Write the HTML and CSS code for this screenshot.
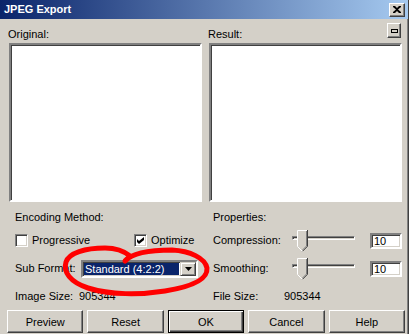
FILE: index.html
```html
<!DOCTYPE html>
<html>
<head>
<meta charset="utf-8">
<link rel="stylesheet" href="styles.css">
</head>
<body>
<div class="window">
  <div class="titlebar">
    <span class="title">JPEG Export</span>
    <span class="tbtn close">
      <svg width="8" height="7" viewBox="0 0 8 7"><path d="M0 0h2l2 2 2-2h2v1L5 3.5 8 6v1H6L4 5 2 7H0V6l3-2.5L0 1z" fill="#000"/></svg>
    </span>
  </div>
  <div class="content">
    <div class="previews">
      <div class="panel">
        <div class="panel-head"><span class="label">Original:</span></div>
        <div class="preview"></div>
      </div>
      <div class="panel">
        <div class="panel-head"><span class="label">Result:</span><span class="tbtn mini"><span class="mini-icon"></span></span></div>
        <div class="preview"></div>
      </div>
    </div>

    <div class="controls">
      <div class="col col-left">
        <div class="row r1"><span>Encoding Method:</span></div>
        <div class="row r2">
          <span class="check"></span><span class="check-label w-prog">Progressive</span>
          <span class="check"><svg width="7" height="7" viewBox="0 0 7 7"><path d="M0 2l2 2 5-4v3L2 7 0 5z" fill="#000"/></svg></span><span class="check-label">Optimize</span>
        </div>
        <div class="row r3">
          <span class="lbl-sub">Sub Format:</span>
          <span class="select">
            <span class="select-text">Standard (4:2:2)</span>
            <span class="select-btn"><svg width="7" height="4" viewBox="0 0 7 4"><path d="M0 0h7L3.5 4z" fill="#000"/></svg></span>
          </span>
        </div>
        <div class="row r4"><span class="lbl-size">Image Size:</span><span>905344</span></div>
      </div>
      <div class="col col-right">
        <div class="row r1"><span>Properties:</span></div>
        <div class="row r2">
          <span class="lbl-prop">Compression:</span>
          <span class="slider"><span class="track"></span><svg class="thumb" width="11" height="22" viewBox="0 0 11 22"><path d="M0 0h11v16l-5.5 5.5L0 16z" fill="#d4d0c8"/><path d="M0.5 16.5V0.5H10" fill="none" stroke="#fff"/><path d="M0.5 16.5l5 5" fill="none" stroke="#fff"/><path d="M10.5 0v16.3l-5 5" fill="none" stroke="#404040"/><path d="M9.5 1v15l-4 4" fill="none" stroke="#808080"/></svg></span>
          <span class="edit">10</span>
        </div>
        <div class="row r3">
          <span class="lbl-prop">Smoothing:</span>
          <span class="slider"><span class="track"></span><svg class="thumb" width="11" height="22" viewBox="0 0 11 22"><path d="M0 0h11v16l-5.5 5.5L0 16z" fill="#d4d0c8"/><path d="M0.5 16.5V0.5H10" fill="none" stroke="#fff"/><path d="M0.5 16.5l5 5" fill="none" stroke="#fff"/><path d="M10.5 0v16.3l-5 5" fill="none" stroke="#404040"/><path d="M9.5 1v15l-4 4" fill="none" stroke="#808080"/></svg></span>
          <span class="edit">10</span>
        </div>
        <div class="row r4"><span class="lbl-file">File Size:</span><span>905344</span></div>
      </div>
    </div>

    <div class="buttons">
      <button class="btn">Preview</button>
      <button class="btn">Reset</button>
      <button class="btn default">OK</button>
      <button class="btn">Cancel</button>
      <button class="btn">Help</button>
    </div>
  </div>

  <svg class="scribble" width="409" height="334" viewBox="0 0 409 334">
    <path d="M125 261 C132 253 150 250 172 250 C190 251 205 258 207 268 C208 280 190 287 165 291 C140 295 110 295 88 288 C70 282 63 272 66 262 C69 253 85 248 105 248 C115 248 124 251 130 256" fill="none" stroke="#ff0000" stroke-width="5" stroke-linecap="round" stroke-linejoin="round"/>
  </svg>
</div>
</body>
</html>
```

FILE: styles.css
```css
* { box-sizing: border-box; }

html, body {
  margin: 0;
  padding: 0;
}

body {
  width: 409px;
  height: 334px;
  overflow: hidden;
  background: #d4d0c8;
  font-family: "Liberation Sans", Arial, sans-serif;
  font-size: 11px;
  line-height: 13px;
  color: #000;
}

.window {
  position: relative;
  width: 409px;
  height: 334px;
  background: #d4d0c8;
  border-right: 1px solid #404040;
}

.titlebar {
  height: 19px;
  display: flex;
  align-items: center;
  padding: 0 3px 0 4px;
  background: linear-gradient(to right, #0a246a, #a6caf0);
}

.title {
  flex: 1;
  color: #fff;
  font-weight: bold;
  font-size: 11px;
}

.tbtn {
  display: flex;
  align-items: center;
  justify-content: center;
  background: #d4d0c8;
  border: 1px solid;
  border-color: #fff #404040 #404040 #fff;
  box-shadow: inset -1px -1px #808080;
}

.close {
  width: 16px;
  height: 14px;
  padding-bottom: 1px;
}

.content {
  height: 315px;
  box-shadow: inset -1px 0 #808080;
}

.previews {
  display: flex;
  gap: 7px;
  padding-left: 9px;
}

.panel {
  width: 193px;
  display: flex;
  flex-direction: column;
}

.panel-head {
  height: 24px;
  display: flex;
  align-items: flex-end;
  padding-bottom: 2px;
}

.label {
  margin-left: -1px;
  flex: 1;
}

.mini {
  align-self: flex-start;
  width: 14px;
  height: 15px;
  margin-top: 4px;
  margin-right: 1px;
}

.mini-icon {
  width: 7px;
  height: 4px;
  border: 1px solid #000;
}

.preview {
  height: 159px;
  background: #fff;
  border: 2px solid;
  border-color: #808080 #fff #fff #808080;
  box-shadow: inset 1px 1px #404040;
}

.controls {
  display: flex;
  margin-top: 1px;
}

.col {
  display: flex;
  flex-direction: column;
}

.col-left {
  width: 213px;
  padding-left: 15px;
}

.col-right {
  flex: 1;
}

.row {
  display: flex;
  align-items: center;
  white-space: nowrap;
}

.r1 { height: 29px; }
.r2 { height: 17px; }
.r3 { height: 39px; }
.r4 { height: 16px; }

.check {
  width: 13px;
  height: 13px;
  background: #fff;
  border: 1px solid;
  border-color: #808080 #fff #fff #808080;
  box-shadow: inset 1px 1px #404040, inset -1px -1px #d4d0c8;
  display: flex;
  align-items: center;
  justify-content: center;
  flex: none;
}

.check-label {
  margin-left: 4px;
}

.w-prog {
  width: 102px;
}

.lbl-sub {
  width: 66px;
}

.select {
  width: 117px;
  height: 18px;
  display: flex;
  align-items: stretch;
  background: #fff;
  border: 2px solid;
  border-color: #808080 #fff #fff #808080;
  box-shadow: inset 1px 1px #404040, inset -1px -1px #d4d0c8;
  padding: 1px;
}

.select-text {
  flex: 1;
  background: #0a246a;
  color: #fff;
  padding-left: 1px;
  line-height: 12px;
  margin: 0 1px 0 0;
}

.select-btn {
  width: 16px;
  background: #d4d0c8;
  display: flex;
  align-items: center;
  justify-content: center;
  border: 1px solid;
  border-color: #d4d0c8 #404040 #404040 #d4d0c8;
  box-shadow: inset 1px 1px #fff, inset -1px -1px #808080;
  margin: -1px -1px -1px 0;
}

.lbl-size {
  width: 64px;
}

.lbl-prop {
  width: 79px;
}

.lbl-file {
  width: 71px;
}

.slider {
  position: relative;
  width: 63px;
  height: 21px;
}

.track {
  position: absolute;
  left: 0;
  right: 0;
  top: 6px;
  height: 4px;
  border: 1px solid;
  border-color: #808080 #fff #fff #808080;
  box-shadow: inset 1px 1px #404040;
  background: #d4d0c8;
}

.thumb {
  position: absolute;
  left: 5px;
  top: 0;
}

.edit {
  margin-left: 15px;
  width: 32px;
  height: 16px;
  background: #fff;
  border: 2px solid;
  border-color: #808080 #fff #fff #808080;
  box-shadow: inset 1px 1px #404040, inset -1px -1px #d4d0c8;
  padding-left: 2px;
  line-height: 12px;
}

.buttons {
  display: grid;
  grid-template-columns: repeat(5, 1fr);
  gap: 4px;
  padding: 0 3px 0 7px;
  margin-top: 6px;
}

.btn {
  height: 23px;
  margin: 0;
  padding: 0;
  font-family: "Liberation Sans", Arial, sans-serif;
  font-size: 11px;
  color: #000;
  background: #d4d0c8;
  border: 1px solid;
  border-color: #fff #404040 #404040 #fff;
  box-shadow: inset -1px -1px #808080;
  border-radius: 0;
}

.btn.default {
  border: 1px solid #000;
  box-shadow: inset 1px 1px #fff, inset -1px -1px #404040, inset -2px -2px #808080;
}

.scribble {
  position: absolute;
  left: 0;
  top: 0;
  pointer-events: none;
}
```
